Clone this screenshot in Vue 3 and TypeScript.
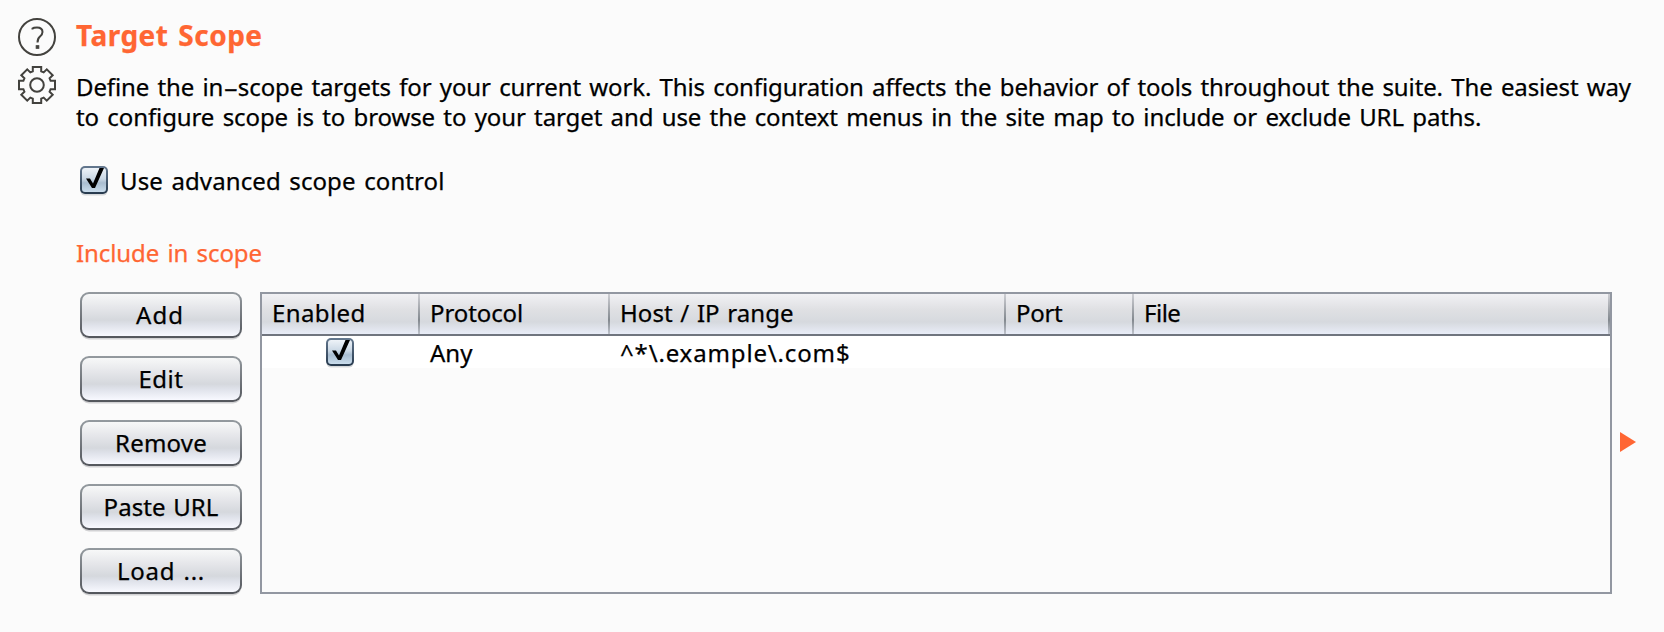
<script setup lang="ts">
interface Column {
  key: string
  label: string
}

const actions: { key: string; label: string }[] = [
  { key: 'add', label: 'Add' },
  { key: 'edit', label: 'Edit' },
  { key: 'remove', label: 'Remove' },
  { key: 'paste', label: 'Paste URL' },
  { key: 'load', label: 'Load ...' },
]

const columns: Column[] = [
  { key: 'enabled', label: 'Enabled' },
  { key: 'protocol', label: 'Protocol' },
  { key: 'host', label: 'Host / IP range' },
  { key: 'port', label: 'Port' },
  { key: 'file', label: 'File' },
]

const rule = { protocol: 'Any', host: '^*\\.example\\.com$' }

// Outline of an eight-toothed gear centred on (19, 19).
function gearPath(): string {
  const points: string[] = []
  for (let i = 0; i < 8; i++) {
    const a = (i * Math.PI) / 4
    const corners: [number, number][] = [
      [13.6, -4.2],
      [18, -4.2],
      [18, 4.2],
      [13.6, 4.2],
    ]
    for (const [r, t] of corners) {
      const x = 19 + r * Math.cos(a) - t * Math.sin(a)
      const y = 19 + r * Math.sin(a) + t * Math.cos(a)
      points.push(`${x.toFixed(2)} ${y.toFixed(2)}`)
    }
  }
  return `M${points.join('L')}Z`
}
const gear = gearPath()
</script>

<template>
  <main class="panel">
    <aside class="tools">
      <svg width="38" height="38" viewBox="0 0 38 38" fill="none" stroke="#43423e" stroke-width="2">
        <circle cx="19" cy="19" r="18" />
        <path d="M14.5 11.5V10.5Q15.5 9.5 19 9.5Q24.5 9.5 24.5 14Q24.5 16.500 22 18.500Q19.500 20.500 19.500 24.500" />
        <rect x="18.2" y="27.700" width="2.600" height="2.600" fill="#43423e" stroke-width="1" />
      </svg>
      <svg width="38" height="38" viewBox="0 0 38 38" fill="none" stroke="#43423e" stroke-width="2">
        <path :d="gear" />
        <circle cx="19" cy="19" r="6.800" />
      </svg>
    </aside>

    <section class="content">
      <h1>Target Scope</h1>
      <p class="intro">
        <span class="line one">Define the in<span class="dash">-</span>scope targets for your current work. This configuration affects the behavior of tools throughout the suite. The easiest way</span>
        <span class="line two">to configure scope is to browse to your target and use the context menus in the site map to include or exclude URL paths.</span>
      </p>

      <div class="option">
        <span class="check"><svg width="28" height="28" viewBox="0 0 28 28"><path d="M6 12.500H10L13 17.500L19.500 2H24L15 22H12Z" /></svg></span>
        <span class="caption">Use advanced scope control</span>
      </div>

      <h2>Include in scope</h2>

      <div class="scope">
        <div class="actions">
          <button v-for="a in actions" :key="a.key" :class="a.key">{{ a.label }}</button>
        </div>
        <div class="table">
          <div class="row head">
            <div v-for="c in columns" :key="c.key" class="cell" :class="c.key">{{ c.label }}</div>
          </div>
          <div class="row rule">
            <div class="cell tick">
              <span class="check"><svg width="28" height="28" viewBox="0 0 28 28"><path d="M6 12.500H10L13 17.500L19.500 2H24L15 22H12Z" /></svg></span>
            </div>
            <div class="cell any">{{ rule.protocol }}</div>
            <div class="cell pattern">{{ rule.host }}</div>
            <div class="cell"></div>
            <div class="cell"></div>
          </div>
        </div>
        <svg class="arrow" width="16" height="20" viewBox="0 0 16 20"><path d="M0 0L16 10L0 20Z" fill="#ff6633" /></svg>
      </div>
    </section>
  </main>
</template>

<style>
body {
  margin: 0;
  background: #fbfbfb;
}
</style>

<style scoped>
.panel {
  box-sizing: border-box;
  width: 1664px;
  height: 632px;
  display: flex;
  gap: 20px;
  padding: 15px 0 0 18px;
  overflow: hidden;
  background: #fbfbfb;
  color: #000;
  font-family: "Noto Sans", "Open Sans", sans-serif;
  font-size: 24px;
  white-space: nowrap;
  -webkit-text-stroke: 0.25px currentColor;
}
.tools {
  display: flex;
  flex-direction: column;
  gap: 10px;
  padding-top: 3px;
  width: 38px;
}
.tools svg,
.check svg {
  display: block;
}
.content {
  width: 1560px;
}
h1,
h2,
p {
  margin: 0;
}
h1 {
  color: #ff6633;
  font-size: 28px;
  line-height: 40px;
  letter-spacing: 0.5px;
  word-spacing: 2px;
}
.intro {
  padding-top: 17px;
  line-height: 30px;
  word-spacing: 2.2px;
}
.line {
  display: block;
}
.one {
  letter-spacing: -0.12px;
}
.two {
  letter-spacing: -0.1px;
}
.dash {
  display: inline-block;
  margin: 0 3.5px;
  transform: scaleX(1.9);
}
.option {
  display: flex;
  gap: 12px;
  margin: 34px 0 0 4px;
  height: 30px;
  line-height: 30px;
}
.caption {
  letter-spacing: 0.1px;
  word-spacing: 2.2px;
}
.check {
  display: block;
  box-sizing: border-box;
  width: 28px;
  height: 28px;
  border: 2px solid transparent;
  border-radius: 5px;
  background:
    linear-gradient(#eef3f8, #cad8e5 45%, #a9bdd0 62%, #c9dcec) padding-box,
    linear-gradient(#64788f, #26394d) border-box;
  box-shadow: 0 2px 0 -0.5px #d6d8da;
}
.check svg {
  margin: -2px;
}
h2 {
  margin-top: 42px;
  color: #ff6633;
  font-size: 24px;
  font-weight: 400;
  line-height: 30px;
  letter-spacing: -0.1px;
  word-spacing: 2.2px;
}
.scope {
  display: flex;
  margin-top: 24px;
  padding-left: 4px;
  align-items: flex-start;
}
.actions {
  display: flex;
  flex-direction: column;
  gap: 18px;
  width: 162px;
  margin-right: 18px;
}
button {
  box-sizing: border-box;
  height: 46px;
  padding: 0;
  border: 2px solid transparent;
  border-radius: 9px;
  background:
    linear-gradient(#f7f8f8, #e4e5e9 35%, #d5d8dd 62%, #dfe2ea 74%, #f8f9ff) padding-box,
    linear-gradient(#949a9f, #53565c) border-box;
  box-shadow: 0 2px 0 -0.5px #d2d2d4;
  color: #000;
  font: inherit;
  line-height: 42px;
  word-spacing: 1.35px;
}
.add {
  padding-right: 2px;
  letter-spacing: 1px;
}
.edit {
  letter-spacing: 0.5px;
}
.remove {
  letter-spacing: 0.2px;
}
.paste {
  letter-spacing: 0.05px;
}
.load {
  letter-spacing: 0.7px;
}
.table {
  box-sizing: border-box;
  width: 1352px;
  height: 302px;
  border: 2px solid #9297a1;
}
.row {
  display: grid;
  grid-template-columns: 158px 190px 396px 128px 1fr;
}
.head {
  height: 40px;
  border-bottom: 2px solid #70757f;
  background: linear-gradient(#f1f1f4, #dfe0e3 40%, #d6d9de 70%, #e9edf8);
  line-height: 38px;
  word-spacing: 1.35px;
}
.cell {
  padding-left: 10px;
}
.head .cell {
  height: 40px;
  box-sizing: border-box;
  background: linear-gradient(#cdced3, #83898f 65%, #bec2cb) right / 2px 100% no-repeat;
}
.enabled {
  letter-spacing: 0.4px;
}
.protocol {
  letter-spacing: -0.1px;
}
.host {
  letter-spacing: 0.05px;
}
.port {
  letter-spacing: -0.3px;
}
.file {
  letter-spacing: -0.5px;
}
.rule {
  height: 32px;
  background: #fff;
  line-height: 33px;
}
.tick {
  padding: 2px 0 0 64px;
}
.any {
  padding-left: 10px;
}
.pattern {
  letter-spacing: 0.85px;
}
.arrow {
  display: block;
  margin: 140px 0 0 8px;
}
</style>
